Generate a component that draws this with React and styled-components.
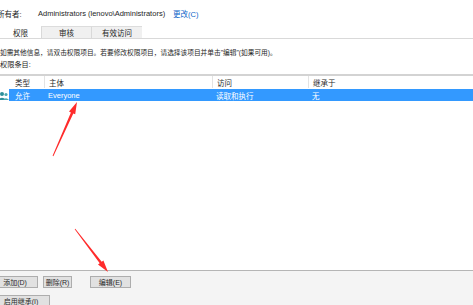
import React from 'react'
import styled, { createGlobalStyle } from 'styled-components'

const GlobalStyle = createGlobalStyle`
  html, body {
    margin: 0;
    padding: 0;
    background: #ffffff;
  }
  body {
    font-family: "Liberation Sans", "Noto Sans CJK SC", sans-serif;
    font-size: 7.5px;
    color: #1e1e1e;
  }
`

const Page = styled.div`
  position: relative;
  width: 473px;
  height: 305px;
  overflow: hidden;
  display: flex;
  flex-direction: column;
  background: #ffffff;
`

const OwnerRow = styled.div`
  display: flex;
  align-items: center;
  height: 10px;
  margin-top: 8px;
`

const OwnerLabel = styled.span`
  width: 41px;
  margin-left: -3px;
  white-space: nowrap;
`

const OwnerName = styled.span`
  width: 135px;
  white-space: nowrap;
`

const ChangeLink = styled.span`
  color: #0a64c8;
`

const TabStrip = styled.div`
  display: flex;
  margin-top: 8px;
  height: 12px;
  border-bottom: 1px solid #d9d9d9;
`

const Tab = styled.div`
  width: ${p => p.$w}px;
  display: flex;
  align-items: center;
  justify-content: center;
  background: ${p => (p.$active ? '#ffffff' : '#f0f0f0')};
  border-left: ${p => (p.$active ? 'none' : '1px solid #d9d9d9')};
  border-top: ${p => (p.$active ? 'none' : '1px solid #dcdcdc')};
  box-sizing: border-box;
  white-space: nowrap;
`

const Info = styled.div`
  margin-top: 9px;
  height: 10px;
  line-height: 10px;
  font-size: 6.7px;
  white-space: nowrap;
`

const Caption = styled.div`
  margin-top: 2px;
  height: 10px;
  line-height: 10px;
  font-size: 7.2px;
`

const ListBox = styled.div`
  margin-top: 4px;
  flex: 1;
  display: flex;
  flex-direction: column;
  border-top: 2px solid #d3d3d3;
`

const HeaderRow = styled.div`
  display: grid;
  grid-template-columns: 44px 168px 96px 1fr;
  height: 12px;
  align-items: center;
`

const HeadCell = styled.div`
  height: 100%;
  display: flex;
  align-items: center;
  padding-left: ${p => p.$pad || 4}px;
  border-left: ${p => (p.$first ? 'none' : '1px solid #e3e3e3')};
  color: #2a2a2a;
  white-space: nowrap;
`

const SelectedRow = styled.div`
  display: grid;
  grid-template-columns: 9px 35px 168px 96px 1fr;
  height: 12px;
  margin-top: 1px;
  align-items: center;
`

const IconCell = styled.div`
  height: 100%;
  display: flex;
  align-items: center;
`

const Cell = styled.div`
  height: 100%;
  display: flex;
  align-items: center;
  padding-left: ${p => p.$pad || 4}px;
  background: #3399ff;
  color: #ffffff;
  white-space: nowrap;
`

const Footer = styled.div`
  height: 35px;
  box-sizing: border-box;
  border-top: 1px solid #b5b5b5;
  background: #f4f4f4;
  padding-top: 5px;
  display: flex;
  flex-direction: column;
  gap: 7px;
`

const ButtonRow = styled.div`
  display: flex;
  gap: 5px;
`

const Button = styled.div`
  width: ${p => p.$w}px;
  height: 12px;
  margin-left: ${p => p.$ml || 0}px;
  margin-right: ${p => p.$mr || 0}px;
  flex-shrink: 0;
  box-sizing: border-box;
  background: #e1e1e1;
  border: 1px solid #adadad;
  display: flex;
  align-items: center;
  justify-content: center;
  font-size: 7px;
  white-space: nowrap;
  color: #2a2a2a;
`

const Arrows = styled.svg`
  position: absolute;
  left: 0;
  top: 0;
  pointer-events: none;
`

// tapered annotation arrow, thin at the tail, triangular head at the tip
const arrow = (x1, y1, x2, y2) => {
  const dx = x2 - x1
  const dy = y2 - y1
  const len = Math.hypot(dx, dy)
  const ux = dx / len
  const uy = dy / len
  const nx = -uy
  const ny = ux
  const hb = 12
  const bx = x2 - ux * hb
  const by = y2 - uy * hb
  const pts = [
    [x1 + nx * 0.4, y1 + ny * 0.4],
    [bx + nx * 1.3, by + ny * 1.3],
    [bx + nx * 3.4, by + ny * 3.4],
    [x2, y2],
    [bx - nx * 3.4, by - ny * 3.4],
    [bx - nx * 1.3, by - ny * 1.3],
    [x1 - nx * 0.4, y1 - ny * 0.4],
  ]
  return pts.map(p => p.map(v => v.toFixed(1)).join(',')).join(' ')
}

const UserIcon = () => (
  <svg width="9" height="9" viewBox="0 0 9 9">
    <circle cx="2" cy="3" r="2" fill="#2e8f9a" />
    <path d="M-2 9 Q2 4.5 6 9 Z" fill="#2e8f9a" />
    <circle cx="6" cy="3.5" r="1.6" fill="#4aa8b0" />
    <path d="M3 9 Q6 5.5 9 9 Z" fill="#4aa8b0" />
  </svg>
)

export default function App() {
  return (
    <Page>
      <GlobalStyle />
      <OwnerRow>
        <OwnerLabel>所有者:</OwnerLabel>
        <OwnerName>Administrators (lenovo\Administrators)</OwnerName>
        <ChangeLink>更改(C)</ChangeLink>
      </OwnerRow>

      <TabStrip>
        <Tab $active $w={41}>权限</Tab>
        <Tab $w={50}>审核</Tab>
        <Tab $w={51}>有效访问</Tab>
      </TabStrip>

      <Info>如需其他信息，请双击权限项目。若要修改权限项目，请选择该项目并单击"编辑"(如果可用)。</Info>
      <Caption>权限条目:</Caption>

      <ListBox>
        <HeaderRow>
          <HeadCell $first $pad={15}>类型</HeadCell>
          <HeadCell>主体</HeadCell>
          <HeadCell>访问</HeadCell>
          <HeadCell>继承于</HeadCell>
        </HeaderRow>
        <SelectedRow>
          <IconCell><UserIcon /></IconCell>
          <Cell $pad={6}>允许</Cell>
          <Cell>Everyone</Cell>
          <Cell>读取和执行</Cell>
          <Cell>无</Cell>
        </SelectedRow>
      </ListBox>

      <Footer>
        <ButtonRow>
          <Button $w={46} $ml={-8}>添加(D)</Button>
          <Button $w={29} $mr={13}>删除(R)</Button>
          <Button $w={41}>编辑(E)</Button>
        </ButtonRow>
        <ButtonRow>
          <Button $w={58} $ml={-8}>启用继承(I)</Button>
        </ButtonRow>
      </Footer>

      <Arrows width="473" height="305">
        <polygon points={arrow(53, 156, 77, 102)} fill="#ff2b2b" />
        <polygon points={arrow(75, 229, 108, 272)} fill="#ff2b2b" />
      </Arrows>
    </Page>
  )
}
